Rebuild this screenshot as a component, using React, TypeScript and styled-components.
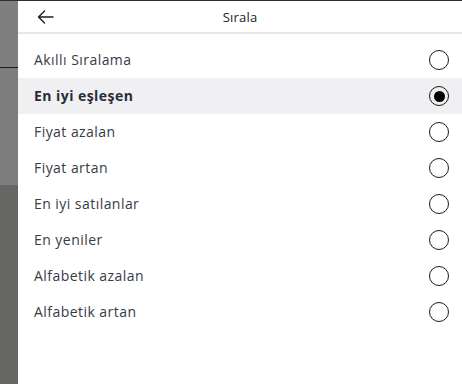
import React, { useState } from 'react';
import styled, { createGlobalStyle } from 'styled-components';

const GlobalStyle = createGlobalStyle`
  html, body {
    margin: 0;
    padding: 0;
    height: 100%;
  }
  body {
    font-family: 'Open Sans', 'Liberation Sans', sans-serif;
    background: #fff;
  }
  #root {
    height: 100%;
  }
`;

const Page = styled.div`
  display: flex;
  height: 100%;
  border-top: 1px solid #2e2e2e;
  box-sizing: border-box;
`;

const Backdrop = styled.div`
  width: 18px;
  flex-shrink: 0;
  display: flex;
  flex-direction: column;
`;

const BackdropBlock = styled.div<{ $h?: number; $color: string }>`
  background: ${p => p.$color};
  height: ${p => (p.$h ? `${p.$h}px` : 'auto')};
  flex: ${p => (p.$h ? '0 0 auto' : '1')};
`;

const Panel = styled.div`
  flex: 1;
  display: flex;
  flex-direction: column;
  background: #fff;
`;

const Header = styled.div`
  height: 31px;
  display: grid;
  grid-template-columns: 56px 1fr 56px;
  align-items: center;
  border-bottom: 2px solid #e6e6ea;
`;

const BackButton = styled.button`
  border: none;
  background: none;
  padding: 0 0 0 19px;
  display: flex;
  align-items: center;
  cursor: pointer;
  color: #1d1d1d;
`;

const Title = styled.div`
  text-align: center;
  font-size: 13px;
  letter-spacing: 0.2px;
  color: #222;
`;

const List = styled.div`
  padding-top: 8px;
  display: flex;
  flex-direction: column;
`;

const Row = styled.label<{ $active: boolean }>`
  height: 36px;
  display: flex;
  align-items: center;
  justify-content: space-between;
  padding: 0 13px 0 16px;
  background: ${p => (p.$active ? '#f0f0f3' : 'transparent')};
  cursor: pointer;
`;

const RowText = styled.span<{ $active: boolean }>`
  font-size: 14px;
  letter-spacing: 0.45px;
  padding-bottom: 2px;
  color: ${p => (p.$active ? '#272d38' : '#353b47')};
  font-weight: ${p => (p.$active ? 700 : 400)};
`;

const Radio = styled.span<{ $checked: boolean }>`
  width: 20px;
  height: 20px;
  box-sizing: border-box;
  border-radius: 50%;
  border: 1.5px solid #1a1a1a;
  display: flex;
  align-items: center;
  justify-content: center;
  &::after {
    content: '';
    display: ${p => (p.$checked ? 'block' : 'none')};
    width: 11px;
    height: 11px;
    border-radius: 50%;
    background: #000;
  }
`;

const options = [
  'Akıllı Sıralama',
  'En iyi eşleşen',
  'Fiyat azalan',
  'Fiyat artan',
  'En iyi satılanlar',
  'En yeniler',
  'Alfabetik azalan',
  'Alfabetik artan',
];

export default function App() {
  const [selected, setSelected] = useState(1);

  return (
    <>
      <GlobalStyle />
      <Page>
        <Backdrop>
          <BackdropBlock $h={66} $color="#7f7f7f" />
          <BackdropBlock $h={1} $color="#1c1c1c" />
          <BackdropBlock $h={117} $color="#7d7d7d" />
          <BackdropBlock $color="#666665" />
        </Backdrop>
        <Panel>
          <Header>
            <BackButton aria-label="Geri">
              <svg width="17" height="14" viewBox="0 0 17 14" fill="none">
                <path d="M16 7H1.5M7.5 1L1.5 7l6 6" stroke="#1d1d1d" strokeWidth="1.4" strokeLinecap="round" strokeLinejoin="round" />
              </svg>
            </BackButton>
            <Title>Sırala</Title>
            <span />
          </Header>
          <List>
            {options.map((o, i) => (
              <Row key={o} $active={i === selected} onClick={() => setSelected(i)}>
                <RowText $active={i === selected}>{o}</RowText>
                <Radio $checked={i === selected} />
              </Row>
            ))}
          </List>
        </Panel>
      </Page>
    </>
  );
}
